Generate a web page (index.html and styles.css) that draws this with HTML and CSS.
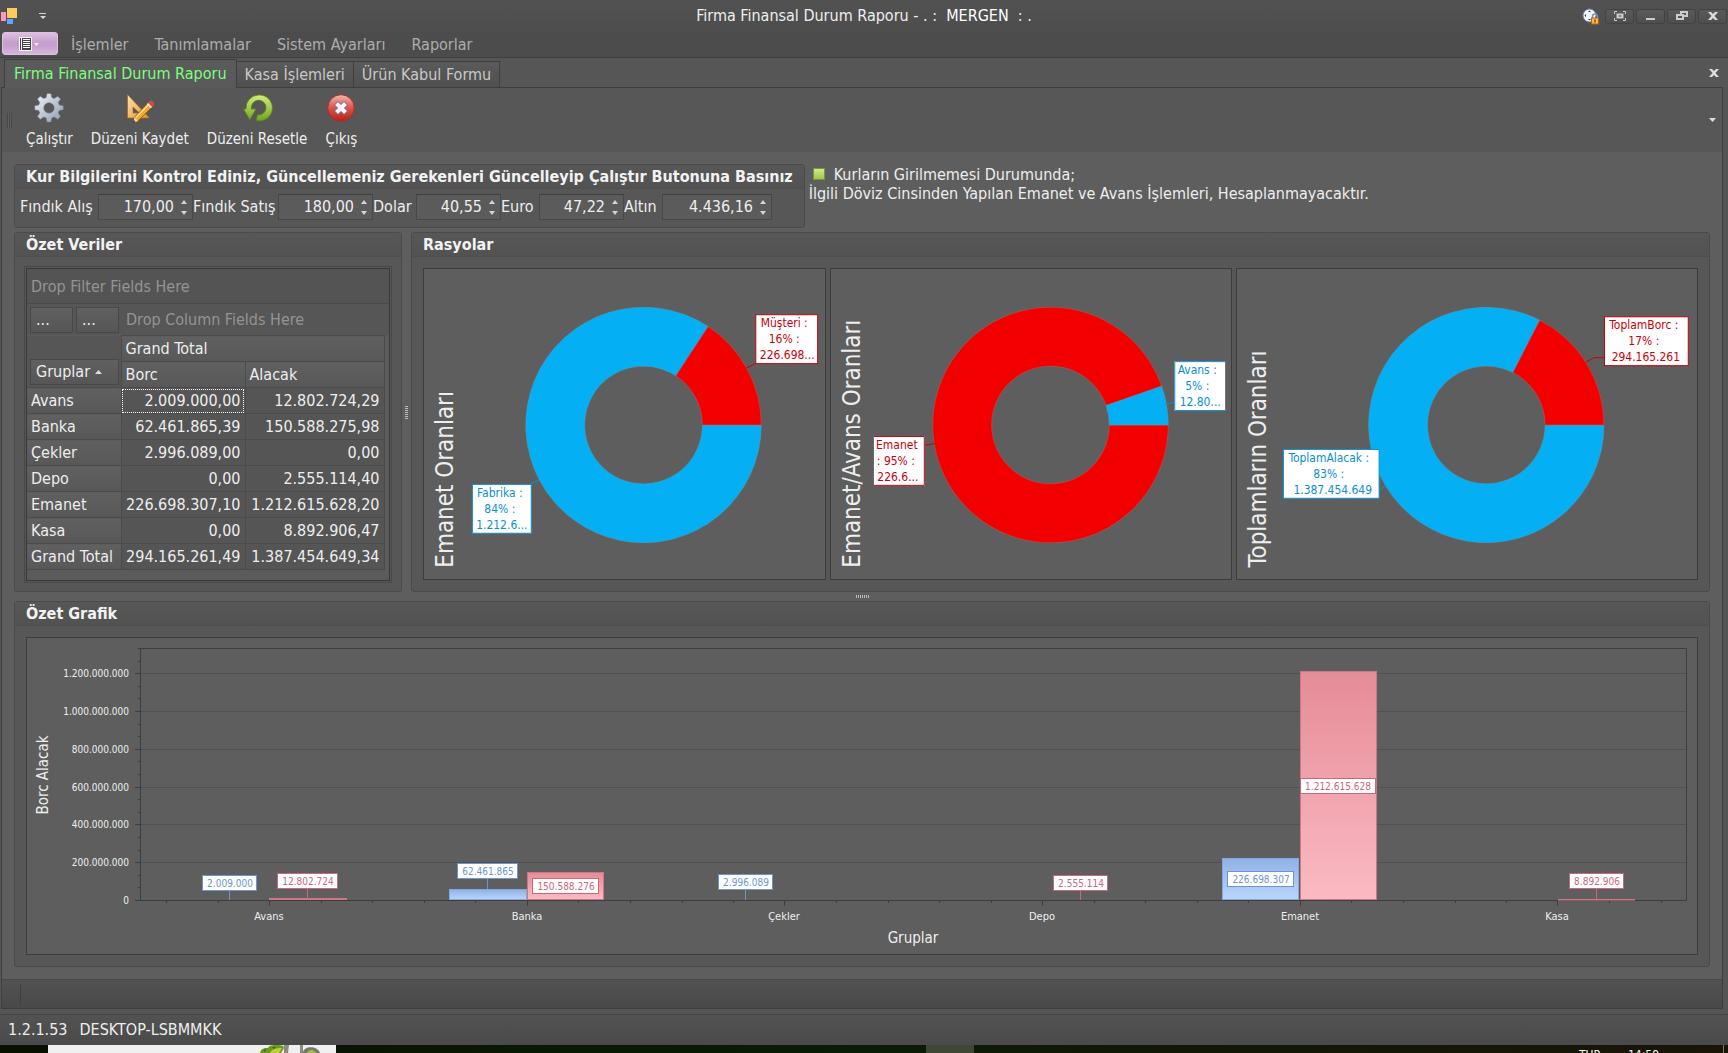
FILE: index.html
```html
<!DOCTYPE html>
<html lang="tr">
<head>
<meta charset="utf-8">
<title>Firma Finansal Durum Raporu</title>
<link rel="stylesheet" href="styles.css">
</head>
<body>
<div class="window">
  <header class="titlebar">
    <div class="title-left">
      <svg class="app-icon" width="18" height="18" viewBox="0 0 18 18" aria-hidden="true">
        <rect x="7" y="1" width="10" height="10" fill="#ffc961"/>
        <rect x="1" y="5" width="5" height="9" fill="#ff98b8"/>
        <rect x="7" y="12" width="6" height="5" fill="#58a8ff"/>
      </svg>
      <button class="quick" aria-label="Hızlı erişim">
        <svg width="8" height="7" viewBox="0 0 8 7"><path d="M0 0h7v1H0zM1 3h6L4 6z" fill="#d8d8d8"/></svg>
      </button>
    </div>
    <h1 class="title">Firma Finansal Durum Raporu - . : &nbsp;<span class="brand">MERGEN</span> &nbsp;: .</h1>
    <div class="title-right">
      <button class="palette" aria-label="Tema">
        <svg width="18" height="17" viewBox="0 0 18 17">
          <circle cx="7.500" cy="7.500" r="6.500" fill="#f4f6ff" stroke="#6f83b4"/>
          <path d="M6 4h3L7.500 2.500zM6 11h3l-1.500 1.500zM4 6v3L2.500 7.500z" fill="#333"/>
          <path d="M10.500 10V8.500a2.500 2.500 0 0 1 5 0V10" fill="none" stroke="#7a8fc0" stroke-width="1.500"/>
          <rect x="9.500" y="10" width="7" height="6" fill="#ffb63d" stroke="#b8621b"/>
          <rect x="12.500" y="11.500" width="1" height="3" fill="#4d2a08"/>
        </svg>
      </button>
      <button class="winbtn" aria-label="Tam ekran"><svg width="12" height="10" viewBox="0 0 12 10"><path d="M.5 3V.5H3M9 .5h2.500V3M11.500 7v2.500H9M3 9.500H.5V7" fill="none" stroke="#ccc"/><path d="M2.500 2.500h7v5h-7zM4.500 4.500v1h3v-1z" fill="#ccc" fill-rule="evenodd"/></svg></button>
      <button class="winbtn" aria-label="Küçült"><svg width="12" height="10" viewBox="0 0 12 10"><path d="M1 7h9v2H1z" fill="#ccc"/></svg></button>
      <button class="winbtn" aria-label="Geri yükle"><svg width="12" height="10" viewBox="0 0 12 10"><path d="M4 0h8v6H8V4h2V2H6v1H4zM0 3h8v6H0zM2 5v2h4V5z" fill="#ccc" fill-rule="evenodd"/></svg></button>
      <button class="winbtn" aria-label="Kapat"><svg width="10" height="8" viewBox="0 0 10 8"><path d="M0 0h3l2 2 2-2h3L6.500 4 10 8H7L5 6 3 8H0l3.500-4z" fill="#ddd"/></svg></button>
    </div>
  </header>

  <nav class="menu">
    <button class="app-menu" aria-label="Uygulama menüsü">
      <svg width="22" height="14" viewBox="0 0 22 14"><rect width="13" height="14" fill="#f6f6f6"/><path d="M1 1h1v12H1zM3 1h9v12H3z" fill="#444"/><path d="M4 2h7v1H4zM4 4h7v1H4zM4 6h7v1H4zM4 8h7v1H4zM4 10h7v1H4z" fill="#fff"/><path d="M15 6h5l-2.500 3z" fill="#f2eaf4"/></svg>
    </button>
    <a href="#islemler">İşlemler</a>
    <a href="#tanimlamalar">Tanımlamalar</a>
    <a href="#ayarlar">Sistem Ayarları</a>
    <a href="#raporlar">Raporlar</a>
  </nav>

  <div class="tabs">
    <button class="tab tab-active">Firma Finansal Durum Raporu</button>
    <button class="tab">Kasa İşlemleri</button>
    <button class="tab">Ürün Kabul Formu</button>
    <button class="tab-close" aria-label="Sekmeyi kapat"><svg width="10" height="8" viewBox="0 0 10 8"><path d="M0 0h3l2 2 2-2h3L6.500 4 10 8H7L5 6 3 8H0l3.500-4z" fill="#ddd"/></svg></button>
  </div>

  <main class="document">
    <div class="toolbar">
      <span class="grip"></span>
      <button class="tool">
        <svg width="32" height="32" viewBox="0 0 32 32">
          <defs><linearGradient id="steel" x1="0" y1="0" x2="1" y2="1"><stop offset="0" stop-color="#f4f6f9"/><stop offset="1" stop-color="#8d99ad"/></linearGradient></defs>
          <path fill="url(#steel)" stroke="#68758b" stroke-width=".6" fill-rule="evenodd" d="M14 1.500h4l.8 4 2.500 1 3.400-2.300 2.900 2.900-2.300 3.400 1 2.500 4 .8v4l-4 .8-1 2.500 2.300 3.400-2.900 2.900-3.400-2.300-2.500 1-.8 4h-4l-.8-4-2.500-1-3.400 2.300-2.900-2.900 2.300-3.400-1-2.500-4-.8v-4l4-.8 1-2.500-2.300-3.400 2.900-2.900 3.400 2.300 2.500-1zM16 10.700a5.200 5.200 0 1 0 0 10.400 5.200 5.200 0 0 0 0-10.400z"/>
        </svg>
        Çalıştır
      </button>
      <button class="tool">
        <svg width="32" height="32" viewBox="0 0 32 32">
          <defs><linearGradient id="wood" x1="0" y1="0" x2="1" y2="1"><stop offset="0" stop-color="#ffe3ac"/><stop offset="1" stop-color="#e2932f"/></linearGradient></defs>
          <path d="M3.500 2.500L25.500 26H3.500zM9 15v6h6.500z" fill="url(#wood)" fill-rule="evenodd" stroke="#a86420" stroke-width=".7"/>
          <path d="M26 9l4 4-16 16-4.500 2 1-6z" fill="#f8a52c" stroke="#8a4c12" stroke-width=".7"/>
          <path d="M25.500 11.500L12 25.500" stroke="#ffe08a" stroke-width="1.500"/>
          <path d="M26 9c1-2 5 1.500 4 4l-2 2-4-4z" fill="#d84a3c"/>
          <path d="M24 11l4 4-1.200 1.200-4-4z" fill="#d9dfeb"/>
          <path d="M10.500 25l3.500 4-4.500 2z" fill="#f3d5a6"/><path d="M10 28l1.500 2-2.500 1.500z" fill="#222c4c"/>
        </svg>
        Düzeni Kaydet
      </button>
      <button class="tool">
        <svg width="32" height="32" viewBox="0 0 32 32">
          <defs><linearGradient id="leaf" x1="0" y1="0" x2="0" y2="1"><stop offset="0" stop-color="#d3ee79"/><stop offset="1" stop-color="#6fa31c"/></linearGradient></defs>
          <path fill="url(#leaf)" stroke="#54801a" stroke-width=".8" d="M17.500 3A13 13 0 1 1 15 28.500l1.500-5.700A7.300 7.300 0 1 0 10.500 17H15L8.800 28 2.500 17H5A13 13 0 0 1 17.500 3z"/>
        </svg>
        Düzeni Resetle
      </button>
      <button class="tool">
        <svg width="32" height="32" viewBox="0 0 32 32">
          <defs><linearGradient id="ruby" x1="0" y1="0" x2="0" y2="1"><stop offset="0" stop-color="#f0b8b0"/><stop offset=".5" stop-color="#db5349"/><stop offset="1" stop-color="#b3221b"/></linearGradient></defs>
          <circle cx="16" cy="16" r="13.300" fill="url(#ruby)" stroke="#a3302a"/>
          <path d="M13 9.500l3 3 3-3 3.500 3.500-3 3 3 3-3.500 3.500-3-3-3 3-3.500-3.500 3-3-3-3z" fill="#f3f6fd" stroke="#7d5a78" stroke-width="1" stroke-linejoin="round"/>
        </svg>
        Çıkış
      </button>
      <svg class="tool-more" width="8" height="5" viewBox="0 0 8 5" aria-hidden="true"><path d="M0 0h7L3.500 4z" fill="#ddd"/></svg>
    </div>

    <div class="content">
      <div class="rates-row">
        <section class="panel">
          <h2 class="panel-title">Kur Bilgilerini Kontrol Ediniz, Güncellemeniz Gerekenleri Güncelleyip Çalıştır Butonuna Basınız</h2>
          <div class="rates">
            <label class="w-hazelnut-buy" for="r1">Fındık Alış</label>
            <span class="spin spin-m"><input id="r1" value="170,00"><button class="arrows" aria-label="Değiştir"></button></span>
            <label class="w-hazelnut-sell" for="r2">Fındık Satış</label>
            <span class="spin spin-m"><input id="r2" value="180,00"><button class="arrows" aria-label="Değiştir"></button></span>
            <label class="w-dollar" for="r3">Dolar</label>
            <span class="spin spin-s"><input id="r3" value="40,55"><button class="arrows" aria-label="Değiştir"></button></span>
            <label class="w-euro" for="r4">Euro</label>
            <span class="spin spin-s"><input id="r4" value="47,22"><button class="arrows" aria-label="Değiştir"></button></span>
            <label class="w-euro" for="r5">Altın</label>
            <span class="spin spin-l"><input id="r5" value="4.436,16"><button class="arrows" aria-label="Değiştir"></button></span>
          </div>
        </section>
        <p class="note"><span class="note-mark"></span>Kurların Girilmemesi Durumunda;<br>İlgili Döviz Cinsinden Yapılan Emanet ve Avans İşlemleri, Hesaplanmayacaktır.</p>
      </div>

      <div class="middle-row">
        <section class="panel summary">
          <h2 class="panel-title">Özet Veriler</h2>
          <div class="pivot">
            <div class="pivot-inner">
              <div class="filter-drop">Drop Filter Fields Here</div>
              <div class="column-drop">
                <button class="field dots">...</button>
                <button class="field dots">...</button>
                <span class="drop-text">Drop Column Fields Here</span>
              </div>
              <table class="grid">
                <colgroup><col class="c1"><col class="c2"><col class="c3"></colgroup>
                <thead>
                  <tr><td rowspan="2" class="corner"><button class="field groups">Gruplar <svg width="8" height="4" viewBox="0 0 8 4"><path d="M0 4h7L3.500 0z" fill="#ddd"/></svg></button></td><th colspan="2">Grand Total</th></tr>
                  <tr><th>Borc</th><th>Alacak</th></tr>
                </thead>
                <tbody>
                  <tr><th>Avans</th><td class="focused">2.009.000,00</td><td>12.802.724,29</td></tr>
                  <tr><th>Banka</th><td>62.461.865,39</td><td>150.588.275,98</td></tr>
                  <tr><th>Çekler</th><td>2.996.089,00</td><td>0,00</td></tr>
                  <tr><th>Depo</th><td>0,00</td><td>2.555.114,40</td></tr>
                  <tr><th>Emanet</th><td>226.698.307,10</td><td>1.212.615.628,20</td></tr>
                  <tr><th>Kasa</th><td>0,00</td><td>8.892.906,47</td></tr>
                  <tr><th>Grand Total</th><td>294.165.261,49</td><td>1.387.454.649,34</td></tr>
                </tbody>
              </table>
            </div>
          </div>
        </section>
        <div class="splitter-v"><span></span></div>
        <section class="panel ratios">
          <h2 class="panel-title">Rasyolar</h2>
          <div class="donuts">
            <svg class="donut donut-a" viewBox="0 0 402 310">
              <text class="donut-title" transform="translate(29 299) rotate(-90)">Emanet Oranları</text>
              <path class="blue" d="M284.800 57.400A118 118 0 1 0 338 156H279A59 59 0 1 1 252.400 106.700z"/>
              <path class="red" d="M338 156A118 118 0 0 0 284.800 57.400L252.400 106.700A59 59 0 0 1 279 156z"/>
              <path class="red-line" d="M323 99l10-5"/>
              <rect class="red-box" x="332.500" y="45.500" width="62" height="49"/>
              <g class="red-text"><text x="361" y="58">Müşteri :</text><text x="361" y="74">16% :</text><text x="364" y="90">226.698...</text></g>
              <path class="blue-line" d="M115 211l-8 4"/>
              <rect class="blue-box" x="48.500" y="215.500" width="59" height="49"/>
              <g class="blue-text"><text x="76" y="228">Fabrika :</text><text x="76" y="244">84% :</text><text x="78" y="260">1.212.6...</text></g>
            </svg>
            <svg class="donut donut-b" viewBox="0 0 401 310">
              <text class="donut-title" transform="translate(29 299) rotate(-90)">Emanet/Avans Oranları</text>
              <path class="red" d="M331.400 117.100A118 118 0 1 0 338 156H279A59 59 0 1 1 275.700 136.500z"/>
              <path class="blue" d="M338 156A118 118 0 0 0 331.400 117.100L275.700 136.500A59 59 0 0 1 279 156z"/>
              <path class="blue-line" d="M334 135.500l10-2.500"/>
              <rect class="box-fill" x="344" y="92" width="51" height="50"/>
              <path class="blue-line" d="M395 92.500H344.500V141.500H395"/>
              <g class="blue-text"><text x="367" y="105">Avans :</text><text x="367" y="121">5% :</text><text x="370" y="137">12.80...</text></g>
              <path class="red-line" d="M94 176.500l10-2"/>
              <rect class="box-fill" x="43" y="167" width="51" height="50"/>
              <path class="red-line" d="M43 167.500H93.500V216.500H43"/>
              <g class="red-text"><text x="66" y="180">Emanet</text><text x="65" y="196">: 95% :</text><text x="67" y="212">226.6...</text></g>
            </svg>
            <svg class="donut donut-c" viewBox="0 0 461 310">
              <text class="donut-title" transform="translate(29 299) rotate(-90)">Toplamların Oranları</text>
              <path class="blue" d="M303.600 50.900A118 118 0 1 0 368 156H309A59 59 0 1 1 276.800 103.400z"/>
              <path class="red" d="M368 156A118 118 0 0 0 303.600 50.900L276.800 103.400A59 59 0 0 1 309 156z"/>
              <path class="red-line" d="M350 93l8-4.500h10"/>
              <rect class="red-box" x="368.500" y="47.500" width="84" height="49"/>
              <g class="red-text"><text x="408" y="60">ToplamBorc :</text><text x="408" y="76">17% :</text><text x="410" y="92">294.165.261</text></g>
              <path class="blue-line" d="M143 221l6-4"/>
              <rect class="blue-box" x="46.500" y="180.500" width="96" height="49"/>
              <g class="blue-text"><text x="92" y="193">ToplamAlacak :</text><text x="92" y="209">83% :</text><text x="96" y="225">1.387.454.649</text></g>
            </svg>
          </div>
        </section>
      </div>

      <div class="splitter-h"><span></span></div>

      <section class="panel">
        <h2 class="panel-title">Özet Grafik</h2>
        <div class="bars">
          <svg class="bar-chart" viewBox="0 0 1670 316">
            <defs>
              <linearGradient id="pink" x1="0" y1="0" x2="0" y2="1"><stop offset="0" stop-color="#e58c97"/><stop offset="1" stop-color="#fbbac3"/></linearGradient>
              <linearGradient id="sky" x1="0" y1="0" x2="0" y2="1"><stop offset="0" stop-color="#8fb2e6"/><stop offset="1" stop-color="#b9d5fb"/></linearGradient>
            </defs>
            <path class="gridline" d="M114 35.500H1659M114 73.500H1659M114 111.500H1659M114 149.500H1659M114 186.500H1659M114 224.500H1659"/>
            <path class="axis" d="M111 10.500H1659.500V262.500M113.500 10.500V262.500M108 262.500H1660M108 35.500h5M108 73.500h5M108 111.500h5M108 149.500h5M108 186.500h5M108 224.500h5M111 23.500h2M111 48.500h2M111 60.500h2M111 86.500h2M111 98.500h2M111 123.500h2M111 136.500h2M111 161.500h2M111 174.500h2M111 199.500h2M111 212.500h2M111 237.500h2M111 249.500h2M242.500 263v5M500.500 263v5M757.500 263v5M1015.500 263v5M1273.500 263v5M1530.500 263v5M139.500 263v2M191.500 263v2M294.500 263v2M345.500 263v2M397.500 263v2M448.500 263v2M551.500 263v2M603.500 263v2M655.500 263v2M706.500 263v2M809.500 263v2M861.500 263v2M912.500 263v2M964.500 263v2M1067.500 263v2M1118.500 263v2M1170.500 263v2M1221.500 263v2M1324.500 263v2M1376.500 263v2M1428.500 263v2M1479.500 263v2M1582.500 263v2M1634.500 263v2"/>
            <g class="value"><text x="102" y="39">1.200.000.000</text><text x="102" y="77">1.000.000.000</text><text x="102" y="115">800.000.000</text><text x="102" y="153">600.000.000</text><text x="102" y="190">400.000.000</text><text x="102" y="228">200.000.000</text><text x="102" y="266">0</text></g>
            <g class="category"><text x="242" y="282">Avans</text><text x="500" y="282">Banka</text><text x="757" y="282">Çekler</text><text x="1015" y="282">Depo</text><text x="1273" y="282">Emanet</text><text x="1530" y="282">Kasa</text></g>
            <text class="axis-title" x="886" y="305">Gruplar</text>
            <text class="axis-title" transform="translate(21 137) rotate(-90)">Borc Alacak</text>

            <g class="bar-blue"><rect x="422.500" y="251.500" width="77" height="10"/><rect x="1195.500" y="220.500" width="76" height="41"/></g>
            <g class="bar-pink"><rect x="242.500" y="260.500" width="77" height="1"/><rect x="500.500" y="234.500" width="76" height="27"/><rect x="1273.500" y="33.500" width="76" height="228"/><rect x="1531.500" y="261.500" width="76" height="0.500"/></g>
            <path class="blue-mark" d="M202.500 253v9M460.500 241v10M718.500 252v10"/>
            <path class="pink-mark" d="M280.500 251v10M1053.500 253v9M1569.500 251v10"/>
            <g class="blue-mark"><rect x="175.500" y="237.500" width="54" height="15"/><rect x="430.500" y="225.500" width="60" height="15"/><rect x="691.500" y="236.500" width="54" height="15"/><rect x="1200.500" y="233.500" width="66" height="15"/></g>
            <g class="pink-mark"><rect x="250.500" y="235.500" width="60" height="15"/><rect x="505.500" y="240.500" width="66" height="15"/><rect x="1026.500" y="237.500" width="54" height="15"/><rect x="1273.500" y="140.500" width="75" height="15"/><rect x="1542.500" y="235.500" width="54" height="15"/></g>
            <g class="mark-text-blue"><text x="203" y="249">2.009.000</text><text x="461" y="237">62.461.865</text><text x="719" y="248">2.996.089</text><text x="1234" y="245">226.698.307</text></g>
            <g class="mark-text-pink"><text x="281" y="247">12.802.724</text><text x="539" y="252">150.588.276</text><text x="1054" y="249">2.555.114</text><text x="1311" y="152">1.212.615.628</text><text x="1570" y="247">8.892.906</text></g>
          </svg>
        </div>
      </section>
    </div>
    <div class="doc-status"><span></span></div>
  </main>

  <footer class="statusbar"><span>1.2.1.53</span><span>DESKTOP-LSBMMKK</span></footer>
  <div class="taskbar">
    <div class="task-search">
      <svg width="60" height="8" viewBox="0 0 60 8" aria-hidden="true">
        <path d="M0 8c1-5 5-5 8-5 1-3 6-3 8-3 4 0 8 0 8 3l-3 5z" fill="#6f9a22"/><path d="M10 8c2-4 6-5 12-5l-3 5z" fill="#c3cc3a"/>
        <path d="M3 5l3-1-1 3zM12 2l4 0-2 2z" fill="#2f6a1c"/>
        <path d="M24 0h5l-1 8h-4zM40 0h3v8h-3z" fill="#8b8b80"/><path d="M43 8c0-7 14-8 17 0z" fill="#77786e"/><path d="M47 8c2-4 7-4 9 0z" fill="#a5c03c"/>
      </svg>
    </div>
    <span class="task-active"></span>
    <span class="task-lang">TUR</span>
    <span class="task-clock">14:59</span>
    <span class="task-edge"></span>
  </div>
</div>
</body>
</html>
```

FILE: styles.css
```css
* { box-sizing: border-box; }

body {
  margin: 0;
  background: #555;
  color: #eee;
  font: 16px/20px "DejaVu Sans Condensed", "DejaVu Sans", sans-serif;
}

button, input { font: inherit; color: inherit; background: none; border: 0; padding: 0; margin: 0; }
h1, h2, p { margin: 0; font-weight: normal; font-size: inherit; }
a { color: inherit; text-decoration: none; }
svg { display: block; }

.window { display: flex; flex-direction: column; min-height: 100vh; }

/* title bar and main menu */
.titlebar {
  display: grid;
  grid-template-columns: 1fr auto 1fr;
  align-items: center;
  height: 32px;
  background: linear-gradient(#525252, #4d4d4d);
}
.title-left { display: flex; align-items: center; gap: 21px; }
.title { line-height: 32px; }
.brand { color: #fff; }
.title-right { display: flex; justify-content: flex-end; align-items: center; gap: 2px; padding-right: 1px; }
.palette { margin-right: 3px; }
.winbtn {
  display: flex;
  align-items: center;
  justify-content: center;
  width: 29px;
  height: 15px;
  border: 1px solid #424242;
  border-radius: 3px;
  background: linear-gradient(#5a5a5a, #4e4e4e);
}

.menu {
  display: flex;
  align-items: flex-start;
  gap: 26px;
  height: 26px;
  padding: 0 2px;
  border-bottom: 1px solid #3e3e3e;
  background: #4c4c4c;
  color: #adadad;
}
.menu a { line-height: 26px; }
.app-menu {
  display: flex;
  align-items: center;
  justify-content: center;
  width: 56px;
  height: 23px;
  margin-right: -13px;
  border: 1px solid #dcc2e0;
  border-radius: 3px;
  background: linear-gradient(#dcc0e0, #c79fce 45%, #c79fce 60%, #d6b6db);
}

/* document tabs */
.tabs { display: flex; align-items: flex-end; height: 29px; padding: 0 0 0 4px; background: #565656; }
.tab {
  height: 26px;
  padding: 1px 8px 0;
  border: 1px solid #3e3e3e;
  border-bottom: 0;
  border-left: 0;
  background: linear-gradient(#5a5a5a, #505050);
  color: #c8c8c8;
}
.tab-active { height: 29px; padding: 0 9px; border-left: 1px solid #3e3e3e; background: #5a5a5a; color: #7dff7d; position: relative; z-index: 1; margin-bottom: -1px; }
.tab-close { margin: 0 9px 10px auto; }

.document {
  flex: 1;
  display: flex;
  flex-direction: column;
  margin: 0 5px 0 1px;
  border: 1px solid #3e3e3e;
  background: #5e5e5e;
}

/* toolbar */
.toolbar { display: flex; align-items: center; gap: 18px; height: 64px; padding: 1px 5px 0; background: #575757; font-size: 15px; }
.tool { display: flex; flex-direction: column; align-items: center; gap: 5px; line-height: 20px; }
.grip { width: 5px; height: 15px; margin-right: -4px; background: repeating-linear-gradient(90deg, #474747 0 1px, #5f5f5f 1px 2px); }
.tool-more { margin-left: auto; }

/* group panels */
.content { flex: 1; padding: 12px; }
.panel { border: 1px solid #4a4a4a; border-radius: 3px; background: #575757; box-shadow: inset 0 1px #5c5c5c; }
.panel-title {
  height: 24px;
  padding: 0 11px;
  border-bottom: 1px solid #4f4f4f;
  background: linear-gradient(#575757, #525252);
  color: #f2f2f2;
  font-weight: bold;
  line-height: 24px;
  white-space: nowrap;
}

.rates-row { display: flex; align-items: flex-start; gap: 4px; margin-bottom: 4px; }
.rates { display: flex; align-items: center; padding: 5px 31px 7px 5px; }
.spin { display: flex; height: 26px; border: 1px solid #484848; border-top-color: #3f3f3f; background: #5b5b5b; }
.spin input { flex: 1; min-width: 0; text-align: right; outline: 0; }
.spin-m { width: 95px; }
.spin-s { width: 85px; }
.spin-l { width: 110px; }
.w-hazelnut-buy { width: 78px; }
.w-hazelnut-sell { width: 85px; }
.w-dollar { width: 43px; }
.w-euro { width: 38px; }
.rates label { white-space: nowrap; }
.arrows { display: flex; flex-direction: column; justify-content: space-between; align-items: center; width: 18px; padding: 5px 5px 4px 6px; }
.arrows::before, .arrows::after { content: ""; border: 3px solid transparent; }
.arrows::before { border-top: 0; border-bottom: 4px solid #d5d5d5; }
.arrows::after { border-bottom: 0; border-top: 4px solid #d5d5d5; }
.note { padding-top: 1px; line-height: 19px; }
.note-mark {
  display: inline-block;
  width: 12px;
  height: 12px;
  margin: 0 9px 0 4px;
  border: 1px solid #739b2f;
  background: linear-gradient(#d3e894, #9fc64a);
}

/* pivot grid */
.middle-row { display: flex; align-items: stretch; }
.summary { width: 388px; flex: none; }
.pivot { margin: 9px 9px 8px; border: 1px solid #484848; padding: 1px; }
.pivot-inner { height: 313px; border: 1px solid #383838; background: #5b5b5b; }
.filter-drop { height: 35px; padding: 0 4px; border-bottom: 1px solid #494949; background: #545454; color: #949494; line-height: 36px; }
.column-drop { display: flex; align-items: center; gap: 3px; height: 31px; padding: 0 3px; background: #565656; color: #949494; }
.drop-text { margin-left: 4px; }
.field { height: 26px; border: 1px solid #484848; background: linear-gradient(#606060, #565656); color: #eee; padding: 0 5px; text-align: left; }
.dots { width: 43px; }
.groups { display: flex; align-items: center; gap: 5px; width: 89px; }
.grid { width: 357px; table-layout: fixed; border-collapse: collapse; }
.c1 { width: 94px; }
.c2 { width: 124px; }
.c3 { width: 139px; }
.grid tr { height: 26px; }
.grid th, .grid td { height: 26px; padding: 0 4px; border: 1px solid #4b4b4b; font-weight: normal; line-height: 20px; white-space: nowrap; }
.grid th { text-align: left; background: linear-gradient(#606060, #585858); }
.grid td { text-align: right; background: #555; }
.grid tr > :first-child { border-left: 0; }
.grid .corner { padding: 0 3px 2px; vertical-align: bottom; background: #565656; border-top: 0; }
.grid .focused { outline: 1px dotted #fff; outline-offset: -2px; }

.splitter-v { display: flex; align-items: center; justify-content: center; width: 9px; }
.splitter-v span { width: 3px; height: 13px; background: repeating-linear-gradient(#bbb 0 1px, #5e5e5e 1px 2px); }
.splitter-h { display: flex; align-items: center; justify-content: center; height: 9px; }
.splitter-h span { width: 13px; height: 3px; background: repeating-linear-gradient(90deg, #bbb 0 1px, #5e5e5e 1px 2px); }

/* ratio donuts */
.ratios { flex: 1; min-width: 0; }
.donuts { display: flex; gap: 4px; padding: 11px; }
.donut { height: 312px; min-width: 0; border: 1px solid #3c3c3c; background: #5e5e5e; }
.donut-a { flex: 404; }
.donut-b { flex: 403; }
.donut-c { flex: 463; }
.donut-title { font-size: 24px; fill: #eee; }
.blue { fill: #04b0f3; stroke: #4f9fc0; stroke-width: .5; }
.red { fill: #f20000; stroke: #c05a5a; stroke-width: .5; }
.box-fill { fill: #fff; }
.blue-box { fill: #fff; stroke: #0a90cf; }
.red-box { fill: #fff; stroke: #c8000b; }
.blue-line { fill: none; stroke: #0a90cf; }
.red-line { fill: none; stroke: #c8000b; }
.blue-text, .red-text { font-size: 12px; text-anchor: middle; }
.blue-text { fill: #0a90cf; }
.red-text { fill: #c8000b; }

/* bar chart */
.bars { margin: 11px; border: 1px solid #3c3c3c; background: #5e5e5e; }
.bar-chart { width: 100%; height: 316px; }
.gridline { stroke: #515151; }
.axis { fill: none; stroke: #3e3e3e; }
.value { font-size: 10px; fill: #eee; text-anchor: end; }
.category { font-size: 11px; fill: #eee; text-anchor: middle; }
.axis-title { font-size: 15px; fill: #eee; text-anchor: middle; }
.bar-blue { fill: url(#sky); stroke: #84a8dc; }
.bar-pink { fill: url(#pink); stroke: #cf7784; }
.blue-mark { fill: #fff; stroke: #6f94cb; }
.pink-mark { fill: #fff; stroke: #c9687a; }
.mark-text-blue, .mark-text-pink { font-size: 10px; text-anchor: middle; }
.mark-text-blue { fill: #6f94cb; }
.mark-text-pink { fill: #c9687a; }

/* bottom bars */
.doc-status { display: flex; align-items: center; height: 29px; padding-left: 18px; border-top: 1px solid #484848; background: linear-gradient(#525252, #494949); }
.doc-status span { width: 1px; height: 20px; background: #3f3f3f; }
.statusbar {
  display: flex;
  align-items: center;
  gap: 12px;
  height: 31px;
  margin-top: 5px;
  padding: 0 8px;
  border-top: 1px solid #444;
  background: linear-gradient(#525252, #4a4a4a);
}
.taskbar { display: flex; height: 8px; overflow: hidden; background: linear-gradient(90deg, #081004, #0c1a08 50%, #1a1409); color: #fff; font-size: 12px; line-height: 20px; }
.task-search { display: flex; justify-content: flex-end; width: 288px; margin-left: 48px; padding-right: 16px; background: #f0f0f0; }
.task-active { width: 48px; margin-left: 590px; background: #3f4739; }
.task-lang { margin-left: auto; }
.task-clock { margin: 0 64px 0 27px; }
.task-edge { width: 1px; margin-right: 4px; background: #777; }
```
